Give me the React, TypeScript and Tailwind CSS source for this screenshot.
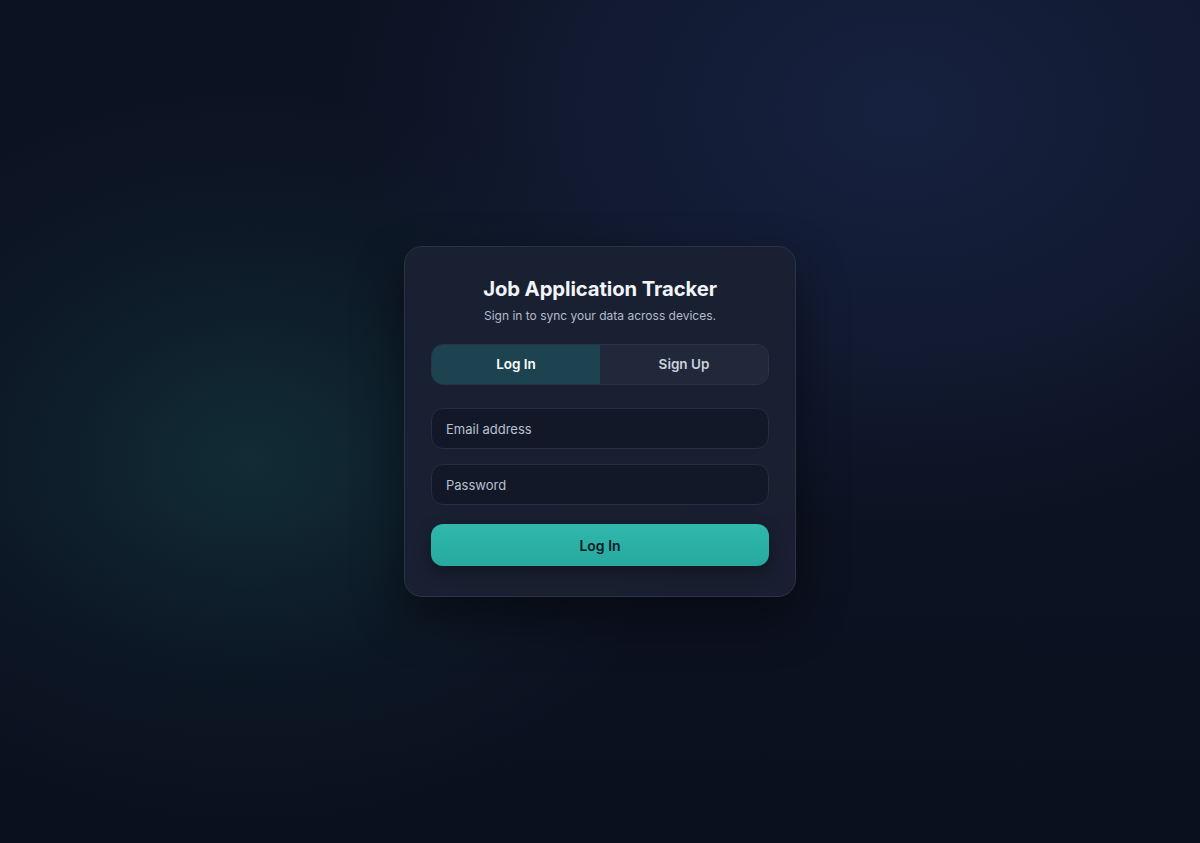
export default function App() {
  return (
    <div
      className="relative min-h-[843px] w-full overflow-hidden bg-[#0c1221] flex items-center justify-center"
      style={{ fontFamily: "Inter, 'Noto Sans', sans-serif" }}
    >
      {/* background glows */}
      <div className="pointer-events-none absolute inset-0 bg-[radial-gradient(ellipse_700px_520px_at_900px_110px,#16213f_0%,rgba(22,33,63,0.55)_45%,rgba(12,18,33,0)_80%)]" />
      <div className="pointer-events-none absolute inset-0 bg-[radial-gradient(ellipse_560px_460px_at_250px_460px,rgba(20,62,66,0.6)_0%,rgba(16,42,52,0.32)_45%,rgba(12,18,33,0)_80%)]" />
      <div className="pointer-events-none absolute inset-0 bg-[linear-gradient(180deg,rgba(0,0,0,0)_60%,rgba(8,12,24,0.35)_100%)]" />

      <div className="relative w-[392px] rounded-[18px] border border-[#2a3347] bg-[#1a2132]/95 px-[26px] pt-[29px] pb-[30px] shadow-[0_20px_50px_rgba(0,0,0,0.45)]">
        <h1 className="text-center text-[20.3px] font-bold leading-[26px] tracking-[-0.1px] text-[#f1f4f9]">
          Job Application Tracker
        </h1>
        <p className="mt-[5px] text-center text-[12px] leading-[17px] text-[#b3bccb]">
          Sign in to sync your data across devices.
        </p>

        <div className="mt-[20px] flex h-[41px] overflow-hidden rounded-[12px] border border-[#2a3347] bg-[#20273a]">
          <button className="flex-1 bg-[#1d4350] text-[13.5px] font-semibold text-white">Log In</button>
          <button className="flex-1 bg-[#212839] text-[13.5px] font-semibold text-[#c9d0dc]">Sign Up</button>
        </div>

        <div className="mt-[23px] flex flex-col gap-[15px]">
          <input
            placeholder="Email address"
            className="h-[41px] w-full rounded-[12px] border border-[#262f42] bg-[#121828] px-[14px] text-[13px] text-white placeholder:text-[#b8c0cc] outline-none"
          />
          <input
            type="password"
            placeholder="Password"
            className="h-[41px] w-full rounded-[12px] border border-[#262f42] bg-[#121828] px-[14px] text-[13px] text-white placeholder:text-[#b8c0cc] outline-none"
          />
        </div>

        <button className="mt-[19px] h-[42px] w-full rounded-[12px] bg-[linear-gradient(180deg,#2fb8ab_0%,#27a89f_100%)] text-[14px] font-semibold text-[#0f1b24] shadow-[0_6px_16px_rgba(0,0,0,0.35)]">
          Log In
        </button>
      </div>
    </div>
  );
}
